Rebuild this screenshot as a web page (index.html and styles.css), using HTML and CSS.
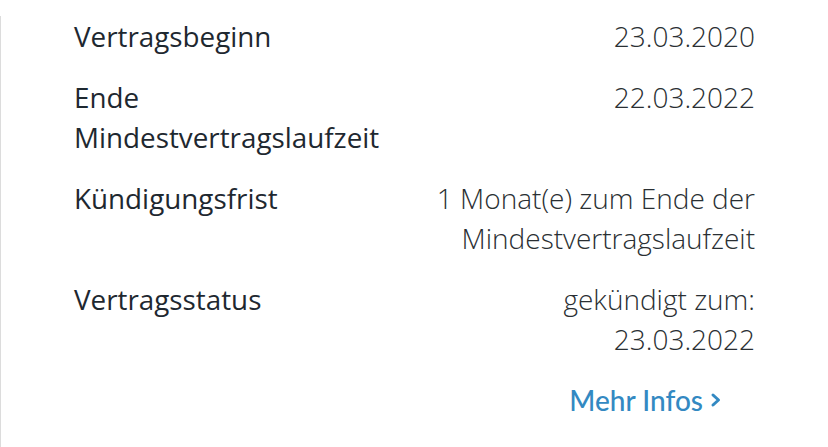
FILE: index.html
```html
<!DOCTYPE html>
<html lang="de">
<head>
<meta charset="utf-8">
<link rel="stylesheet" href="styles.css">
</head>
<body>
<div class="panel">
  <dl class="details">
    <div class="row">
      <dt class="label">Vertragsbeginn</dt>
      <dd class="value">23.03.2020</dd>
    </div>
    <div class="row">
      <dt class="label">Ende Mindestvertragslaufzeit</dt>
      <dd class="value">22.03.2022</dd>
    </div>
    <div class="row">
      <dt class="label">Kündigungsfrist</dt>
      <dd class="value">1 Monat(e) zum Ende der Mindestvertragslaufzeit</dd>
    </div>
    <div class="row">
      <dt class="label">Vertragsstatus</dt>
      <dd class="value">gekündigt zum: 23.03.2022</dd>
    </div>
  </dl>
  <div class="more">
    <a class="more-link" href="#">Mehr Infos
      <svg class="chev" width="12" height="16" viewBox="0 0 12 16" aria-hidden="true"><path d="M3 3 L8.5 8 L3 13" fill="none" stroke="currentColor" stroke-width="3" stroke-linecap="round" stroke-linejoin="round"/></svg>
    </a>
  </div>
</div>
</body>
</html>
```
FILE: styles.css
```css
html, body {
  margin: 0;
  padding: 0;
  background: #ffffff;
}
body {
  font-family: "Open Sans", Lato, sans-serif;
  color: #1e2830;
}
.panel {
  margin-top: 16px;
  border-left: 1px solid #dcdcdc;
  height: 431px;
  box-sizing: border-box;
  padding: 0 73px 0 73px;
}
.details {
  margin: 0;
  display: flex;
  flex-direction: column;
  gap: 21px;
}
.row {
  display: grid;
  grid-template-columns: 1fr 1fr;
  column-gap: 20px;
}
.label {
  font-size: 27.8px;
  line-height: 40px;
  font-weight: 500;
  color: #1e2830;
}
.value {
  margin: 0;
  font-size: 28px;
  line-height: 40px;
  font-weight: 300;
  color: #2a2f33;
  text-align: right;
}
.more {
  display: flex;
  justify-content: flex-end;
  padding-right: 33px;
  margin-top: 21px;
}
.more-link {
  display: flex;
  align-items: center;
  gap: 7px;
  font-family: Lato, sans-serif;
  font-size: 28px;
  line-height: 40px;
  font-weight: 500;
  color: #3389c2;
  text-decoration: none;
}
.chev {
  display: block;
}
```
